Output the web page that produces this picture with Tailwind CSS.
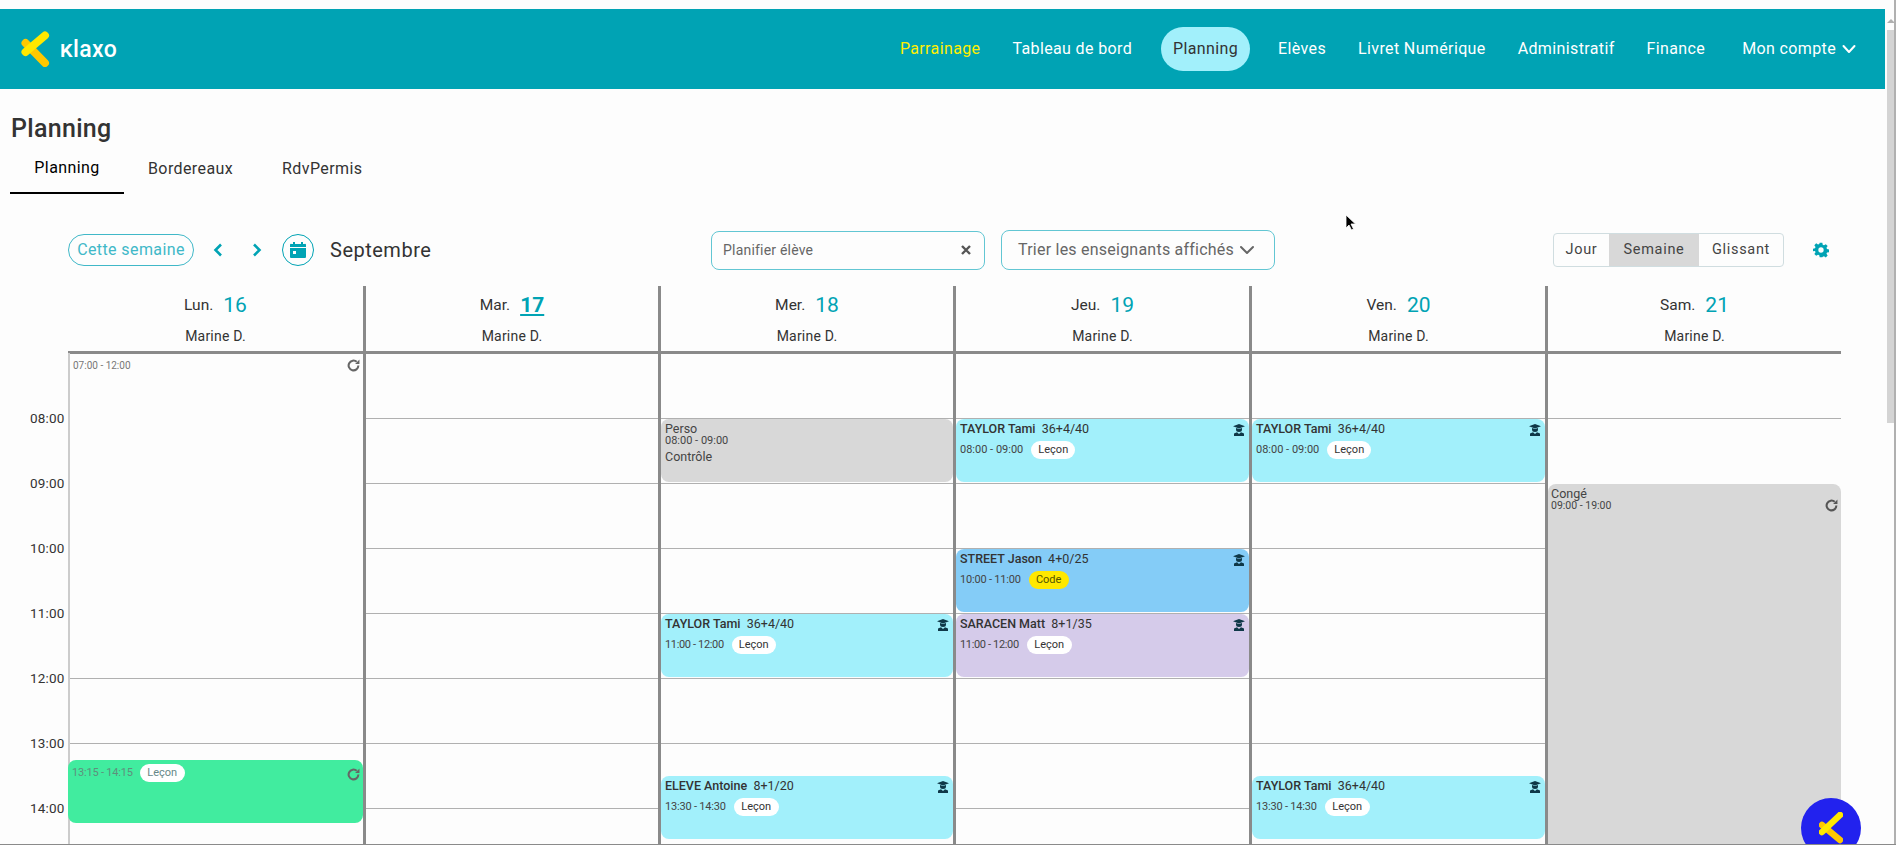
<!DOCTYPE html>
<html lang="fr">
<head>
  <meta charset="UTF-8" />
  <title>Klaxo - Planning</title>
  <script src="https://cdn.jsdelivr.net/npm/@tailwindcss/browser@4"></script>
</head>
<body class="bg-[#fdfdfd] font-['Roboto',sans-serif] text-[#333333] overflow-hidden">
<div class="relative w-[1896px] h-[845px] overflow-hidden flex">

  <!-- Page -->
  <div class="w-[1885px] shrink-0 pt-[9px]">
    <!-- Navbar -->
    <div class="h-[80px] bg-[#00a3b4] flex items-center justify-between text-white text-[16px] tracking-[0.37px]">
      <a class="flex items-center ml-[21px]">
        <svg class="w-[29px] h-[36px]" viewBox="0 0 29 36">
          <path d="M4.500 12 L24 32" stroke="#ffc800" stroke-width="8" stroke-linecap="round" fill="none"/>
          <path d="M4.500 21 L24 4.500" stroke="#ffe800" stroke-width="8" stroke-linecap="round" fill="none"/>
        </svg>
        <span class="ml-[10px] text-[23px] font-medium leading-none tracking-[0.4px]"><span class="[font-variant-caps:small-caps]">k</span>laxo</span>
      </a>
      <div class="flex items-center mr-[29px]">
        <a class="text-[#ffee00] pr-[32px]">Parrainage</a>
        <a class="pr-[29px]">Tableau de bord</a>
        <a class="h-[44px] w-[89px] flex items-center justify-center rounded-[22px] bg-[#a2f0fb] text-[#333333]">Planning</a>
        <a class="pl-[28px] pr-[32px]">Elèves</a>
        <a class="pr-[32px]">Livret Numérique</a>
        <a class="pr-[32px]">Administratif</a>
        <a class="pr-[37px]">Finance</a>
        <a class="flex items-center gap-[6px]">Mon compte
          <svg class="w-[14px] h-[14px]" viewBox="0 0 14 14" fill="none" stroke="white" stroke-width="2" stroke-linecap="round" stroke-linejoin="round"><path d="M1.500 4 L7 10 L12.500 4"/></svg>
        </a>
      </div>
    </div>

    <!-- Title and tabs -->
    <h1 class="ml-[11px] mt-[24px] text-[25px] leading-[32px] font-medium tracking-[0.3px] text-[#333333]">Planning</h1>
    <div class="ml-[10px] mt-[5px] flex text-[16px] tracking-[0.4px] h-[44px]">
      <div class="w-[114px] h-full border-b-2 border-black text-black text-center leading-[36px]">Planning</div>
      <div class="ml-[24px] leading-[37px]">Bordereaux</div>
      <div class="ml-[49px] leading-[37px]">RdvPermis</div>
    </div>

    <!-- Toolbar -->
    <div class="mt-[36px] h-[40px] flex items-center relative">
      <button class="ml-[68px] w-[126px] h-[32px] rounded-full border border-[#40b8c8] text-[#40b8c8] text-[16px] tracking-[0.4px] leading-none">Cette semaine</button>
      <svg class="ml-[18px] w-[12px] h-[14px]" viewBox="0 0 12 14" fill="none" stroke="#00a3b4" stroke-width="2.600"><path d="M9 1.500 L3.500 7 L9 12.500"/></svg>
      <svg class="ml-[27px] w-[12px] h-[14px]" viewBox="0 0 12 14" fill="none" stroke="#00a3b4" stroke-width="2.600"><path d="M3 1.500 L8.500 7 L3 12.500"/></svg>
      <div class="ml-[19px] w-[32px] h-[32px] rounded-full border border-[#00a3b4] flex items-center justify-center">
        <svg class="w-[16px] h-[16px]" viewBox="0 0 16 16" fill="#00a3b4"><path d="M3 0h2v2h6V0h2v2h1.500A1 1 0 0 1 16 3v2H0V3a1 1 0 0 1 1.500-1H3zM0 6h16v9a1 1 0 0 1-1 1H1a1 1 0 0 1-1-1zm3 3v3h3V9z" fill-rule="evenodd"/></svg>
      </div>
      <div class="ml-[16px] w-[102px] whitespace-nowrap text-[20px] tracking-[0.5px]">Septembre</div>

      <div class="ml-[279px] w-[274px] h-[39px] rounded-[8px] border border-[#62c6d3] flex items-center justify-between pl-[11px] pr-[13px] text-[14px] tracking-[0.2px] text-[#666666]">
        <span>Planifier élève</span>
        <svg class="w-[10px] h-[10px]" viewBox="0 0 10 10" stroke="#555555" stroke-width="2.400"><path d="M1 1 L9 9 M9 1 L1 9"/></svg>
      </div>
      <div class="ml-[16px] w-[274px] h-[40px] rounded-[8px] border border-[#62c6d3] flex items-center pl-[16px] text-[16px] tracking-[0.23px] text-[#666666]">
        <span>Trier les enseignants affichés</span>
        <svg class="ml-[6px] w-[14px] h-[14px]" viewBox="0 0 14 14" fill="none" stroke="#666666" stroke-width="2" stroke-linecap="round" stroke-linejoin="round"><path d="M1 4 L7 10 L13 4"/></svg>
      </div>

      <div class="ml-[278px] w-[231px] h-[34px] rounded-[4px] border border-[#d0dde0] flex overflow-hidden text-[14.5px] tracking-[0.7px] text-[#444444]">
        <div class="w-[55px] flex items-center justify-center">Jour</div>
        <div class="w-[90px] bg-[#d8d8d8] flex items-center justify-center">Semaine</div>
        <div class="flex-1 flex items-center justify-center">Glissant</div>
      </div>
      <svg class="ml-[29px] w-[16px] h-[16px]" viewBox="0 0 24 24" fill="#00a3b4"><path fill-rule="evenodd" d="M10 1h4l.6 3.200 1.900.8 2.700-1.800 2.800 2.800-1.800 2.700.8 1.900 3.200.6v4l-3.200.6-.8 1.900 1.800 2.700-2.800 2.800-2.700-1.800-1.900.8L14 23h-4l-.6-3.200-1.900-.8-2.700 1.800-2.800-2.800 1.800-2.700-.8-1.900L-.2 14v-4l3.200-.6.8-1.900L2 4.800 4.800 2l2.700 1.800 1.900-.8zM12 8a4 4 0 1 0 0 8 4 4 0 0 0 0-8z"/></svg>
    </div>

    <!-- Calendar -->
    <div class="mt-[16px] flex">
      <!-- hours -->
      <div class="w-[68px] shrink-0 pt-[68px] text-[13.5px] tracking-[0.2px] text-[#333333]">
        <div class="h-[65px] flex items-end"><span class="ml-[30px] translate-y-[9px]">08:00</span></div>
        <div class="h-[65px] flex items-end"><span class="ml-[30px] translate-y-[9px]">09:00</span></div>
        <div class="h-[65px] flex items-end"><span class="ml-[30px] translate-y-[9px]">10:00</span></div>
        <div class="h-[65px] flex items-end"><span class="ml-[30px] translate-y-[9px]">11:00</span></div>
        <div class="h-[65px] flex items-end"><span class="ml-[30px] translate-y-[9px]">12:00</span></div>
        <div class="h-[65px] flex items-end"><span class="ml-[30px] translate-y-[9px]">13:00</span></div>
        <div class="h-[65px] flex items-end"><span class="ml-[30px] translate-y-[9px]">14:00</span></div>
      </div>

      <div class="w-[1773px] grid grid-cols-[298px_295px_295px_296px_296px_1fr] relative">
        <!-- Lun -->
        <div class="relative h-[559px] border-r-[3px] border-[#8a8a8a]">
          <div class="h-[68px] border-b-[3px] border-[#8a8a8a] text-center">
            <div class="h-[38px] flex items-center justify-center gap-[10px] text-[15.5px] pt-[1px]">Lun. <span class="text-[21px] text-[#00a3b4]">16</span></div>
            <div class="text-[14px] tracking-[0.2px] leading-[24px]">Marine D.</div>
          </div>
          <div class="absolute left-0 top-[67px] bottom-0 w-[2px] bg-[#cccccc]"></div>
          <div class="h-[65px]"></div>
          <div class="h-[65px]"></div>
          <div class="h-[65px]"></div>
          <div class="h-[65px]"></div>
          <div class="h-[65px] border-b border-[#b0b0b0]"></div>
          <div class="h-[65px] border-b border-[#b0b0b0]"></div>
          <div class="h-[65px] border-b border-[#b0b0b0]"></div>
          <div class="absolute left-[5px] top-[72px] text-[10px] text-[#777777]">07:00 - 12:00</div>
          <svg class="absolute right-[3px] top-[73px] w-[13px] h-[13px]" viewBox="0 0 12 12" fill="none" stroke="#666666" stroke-width="1.900"><path d="M10.500 6A4.500 4.500 0 1 1 9 2.600"/><path d="M11.500 0.500V4.500H7.500" fill="#666666" stroke="none"/></svg>
          <div class="absolute left-0 right-0 top-[474px] h-[63px] rounded-[8px] bg-[#41ec9f] pl-[4px]">
            <div class="flex items-center h-[18px] mt-[4px] gap-[7px] text-[11px] text-[#5f8f7c]"><span class="tracking-[-0.2px]">13:15 - 14:15</span><span class="w-[45px] h-[18px] rounded-full bg-white flex items-center justify-center text-[#668888]">Leçon</span></div>
            <svg class="absolute right-[3px] top-[8px] w-[13px] h-[13px]" viewBox="0 0 12 12" fill="none" stroke="#666666" stroke-width="1.900"><path d="M10.500 6A4.500 4.500 0 1 1 9 2.600"/><path d="M11.500 0.500V4.500H7.500" fill="#666666" stroke="none"/></svg>
          </div>
        </div>

        <!-- Mar -->
        <div class="relative h-[559px] border-r-[3px] border-[#8a8a8a]">
          <div class="h-[68px] border-b-[3px] border-[#8a8a8a] text-center">
            <div class="h-[38px] flex items-center justify-center gap-[10px] text-[15.5px] pt-[1px]">Mar. <span class="text-[21px] text-[#00a3b4] font-bold underline">17</span></div>
            <div class="text-[14px] tracking-[0.2px] leading-[24px]">Marine D.</div>
          </div>
          <div class="h-[65px] border-b border-[#b0b0b0]"></div>
          <div class="h-[65px] border-b border-[#b0b0b0]"></div>
          <div class="h-[65px] border-b border-[#b0b0b0]"></div>
          <div class="h-[65px] border-b border-[#b0b0b0]"></div>
          <div class="h-[65px] border-b border-[#b0b0b0]"></div>
          <div class="h-[65px] border-b border-[#b0b0b0]"></div>
          <div class="h-[65px] border-b border-[#b0b0b0]"></div>
        </div>

        <!-- Mer -->
        <div class="relative h-[559px] border-r-[3px] border-[#8a8a8a]">
          <div class="h-[68px] border-b-[3px] border-[#8a8a8a] text-center">
            <div class="h-[38px] flex items-center justify-center gap-[10px] text-[15.5px] pt-[1px]">Mer. <span class="text-[21px] text-[#00a3b4]">18</span></div>
            <div class="text-[14px] tracking-[0.2px] leading-[24px]">Marine D.</div>
          </div>
          <div class="h-[65px] border-b border-[#b0b0b0]"></div>
          <div class="h-[65px] border-b border-[#b0b0b0]"></div>
          <div class="h-[65px] border-b border-[#b0b0b0]"></div>
          <div class="h-[65px] border-b border-[#b0b0b0]"></div>
          <div class="h-[65px] border-b border-[#b0b0b0]"></div>
          <div class="h-[65px] border-b border-[#b0b0b0]"></div>
          <div class="h-[65px] border-b border-[#b0b0b0]"></div>
          <div class="absolute left-0 right-0 top-[133px] h-[63px] rounded-[8px] bg-[#d8d8d8] px-[4px] pt-[3px] text-[#444444]">
            <div class="text-[12.5px] leading-[13px]">Perso</div>
            <div class="text-[11px] leading-[11px]">08:00 - 09:00</div>
            <div class="text-[12.5px] leading-[14px] mt-[4px]">Contrôle</div>
          </div>
          <div class="absolute left-0 right-0 top-[328px] h-[63px] rounded-[8px] bg-[#a2f0fb] px-[4px] pt-[2px]">
            <div class="flex justify-between items-center h-[17px] text-[12.5px]"><span><b class="font-medium">TAYLOR Tami</b>&nbsp; 36+4/40</span><svg class="w-[12px] h-[12px]" viewBox="0 0 12 12" fill="#0f3848"><path d="M6 0 L12 2.200 L6 4.400 L0 2.200Z"/><path d="M3 4 L6 5 L9 4 V5.500 A3 2.500 0 0 1 3 5.500Z"/><path d="M1 12 V9.500 L4 8.300 L6 10 L8 8.300 L11 9.500 V12Z"/></svg></div>
            <div class="flex items-center h-[18px] mt-[3px] gap-[8px] text-[11px] text-[#444444]"><span class="tracking-[-0.35px]">11:00 - 12:00</span><span class="w-[44px] h-[18px] rounded-full bg-white flex items-center justify-center text-[#333333]">Leçon</span></div>
          </div>
          <div class="absolute left-0 right-0 top-[490px] h-[63px] rounded-[8px] bg-[#a2f0fb] px-[4px] pt-[2px]">
            <div class="flex justify-between items-center h-[17px] text-[12.5px]"><span><b class="font-medium">ELEVE Antoine</b>&nbsp; 8+1/20</span><svg class="w-[12px] h-[12px]" viewBox="0 0 12 12" fill="#0f3848"><path d="M6 0 L12 2.200 L6 4.400 L0 2.200Z"/><path d="M3 4 L6 5 L9 4 V5.500 A3 2.500 0 0 1 3 5.500Z"/><path d="M1 12 V9.500 L4 8.300 L6 10 L8 8.300 L11 9.500 V12Z"/></svg></div>
            <div class="flex items-center h-[18px] mt-[3px] gap-[8px] text-[11px] text-[#444444]"><span class="tracking-[-0.2px]">13:30 - 14:30</span><span class="w-[45px] h-[18px] rounded-full bg-white flex items-center justify-center text-[#333333]">Leçon</span></div>
          </div>
        </div>

        <!-- Jeu -->
        <div class="relative h-[559px] border-r-[3px] border-[#8a8a8a]">
          <div class="h-[68px] border-b-[3px] border-[#8a8a8a] text-center">
            <div class="h-[38px] flex items-center justify-center gap-[10px] text-[15.5px] pt-[1px]">Jeu. <span class="text-[21px] text-[#00a3b4]">19</span></div>
            <div class="text-[14px] tracking-[0.2px] leading-[24px]">Marine D.</div>
          </div>
          <div class="h-[65px] border-b border-[#b0b0b0]"></div>
          <div class="h-[65px] border-b border-[#b0b0b0]"></div>
          <div class="h-[65px] border-b border-[#b0b0b0]"></div>
          <div class="h-[65px] border-b border-[#b0b0b0]"></div>
          <div class="h-[65px] border-b border-[#b0b0b0]"></div>
          <div class="h-[65px] border-b border-[#b0b0b0]"></div>
          <div class="h-[65px] border-b border-[#b0b0b0]"></div>
          <div class="absolute left-0 right-0 top-[133px] h-[63px] rounded-[8px] bg-[#a2f0fb] px-[4px] pt-[2px]">
            <div class="flex justify-between items-center h-[17px] text-[12.5px]"><span><b class="font-medium">TAYLOR Tami</b>&nbsp; 36+4/40</span><svg class="w-[12px] h-[12px]" viewBox="0 0 12 12" fill="#0f3848"><path d="M6 0 L12 2.200 L6 4.400 L0 2.200Z"/><path d="M3 4 L6 5 L9 4 V5.500 A3 2.500 0 0 1 3 5.500Z"/><path d="M1 12 V9.500 L4 8.300 L6 10 L8 8.300 L11 9.500 V12Z"/></svg></div>
            <div class="flex items-center h-[18px] mt-[3px] gap-[8px] text-[11px] text-[#444444]"><span>08:00 - 09:00</span><span class="w-[44px] h-[18px] rounded-full bg-white flex items-center justify-center text-[#333333]">Leçon</span></div>
          </div>
          <div class="absolute left-0 right-0 top-[263px] h-[63px] rounded-[8px] bg-[#84ccf7] px-[4px] pt-[2px]">
            <div class="flex justify-between items-center h-[17px] text-[12.5px]"><span><b class="font-medium">STREET Jason</b>&nbsp; 4+0/25</span><svg class="w-[12px] h-[12px]" viewBox="0 0 12 12" fill="#0f3848"><path d="M6 0 L12 2.200 L6 4.400 L0 2.200Z"/><path d="M3 4 L6 5 L9 4 V5.500 A3 2.500 0 0 1 3 5.500Z"/><path d="M1 12 V9.500 L4 8.300 L6 10 L8 8.300 L11 9.500 V12Z"/></svg></div>
            <div class="flex items-center h-[18px] mt-[3px] gap-[8px] text-[11px] text-[#444444]"><span class="tracking-[-0.2px]">10:00 - 11:00</span><span class="w-[40px] h-[18px] rounded-full bg-[#ffe800] flex items-center justify-center text-[#555500]">Code</span></div>
          </div>
          <div class="absolute left-0 right-0 top-[328px] h-[63px] rounded-[8px] bg-[#d5cbea] px-[4px] pt-[2px]">
            <div class="flex justify-between items-center h-[17px] text-[12.5px]"><span><b class="font-medium">SARACEN Matt</b>&nbsp; 8+1/35</span><svg class="w-[12px] h-[12px]" viewBox="0 0 12 12" fill="#0f3848"><path d="M6 0 L12 2.200 L6 4.400 L0 2.200Z"/><path d="M3 4 L6 5 L9 4 V5.500 A3 2.500 0 0 1 3 5.500Z"/><path d="M1 12 V9.500 L4 8.300 L6 10 L8 8.300 L11 9.500 V12Z"/></svg></div>
            <div class="flex items-center h-[18px] mt-[3px] gap-[8px] text-[11px] text-[#444444]"><span class="tracking-[-0.35px]">11:00 - 12:00</span><span class="w-[45px] h-[18px] rounded-full bg-white flex items-center justify-center text-[#333333]">Leçon</span></div>
          </div>
        </div>

        <!-- Ven -->
        <div class="relative h-[559px] border-r-[3px] border-[#8a8a8a]">
          <div class="h-[68px] border-b-[3px] border-[#8a8a8a] text-center">
            <div class="h-[38px] flex items-center justify-center gap-[10px] text-[15.5px] pt-[1px]">Ven. <span class="text-[21px] text-[#00a3b4]">20</span></div>
            <div class="text-[14px] tracking-[0.2px] leading-[24px]">Marine D.</div>
          </div>
          <div class="h-[65px] border-b border-[#b0b0b0]"></div>
          <div class="h-[65px] border-b border-[#b0b0b0]"></div>
          <div class="h-[65px] border-b border-[#b0b0b0]"></div>
          <div class="h-[65px] border-b border-[#b0b0b0]"></div>
          <div class="h-[65px] border-b border-[#b0b0b0]"></div>
          <div class="h-[65px] border-b border-[#b0b0b0]"></div>
          <div class="h-[65px] border-b border-[#b0b0b0]"></div>
          <div class="absolute left-0 right-0 top-[133px] h-[63px] rounded-[8px] bg-[#a2f0fb] px-[4px] pt-[2px]">
            <div class="flex justify-between items-center h-[17px] text-[12.5px]"><span><b class="font-medium">TAYLOR Tami</b>&nbsp; 36+4/40</span><svg class="w-[12px] h-[12px]" viewBox="0 0 12 12" fill="#0f3848"><path d="M6 0 L12 2.200 L6 4.400 L0 2.200Z"/><path d="M3 4 L6 5 L9 4 V5.500 A3 2.500 0 0 1 3 5.500Z"/><path d="M1 12 V9.500 L4 8.300 L6 10 L8 8.300 L11 9.500 V12Z"/></svg></div>
            <div class="flex items-center h-[18px] mt-[3px] gap-[8px] text-[11px] text-[#444444]"><span>08:00 - 09:00</span><span class="w-[44px] h-[18px] rounded-full bg-white flex items-center justify-center text-[#333333]">Leçon</span></div>
          </div>
          <div class="absolute left-0 right-0 top-[490px] h-[63px] rounded-[8px] bg-[#a2f0fb] px-[4px] pt-[2px]">
            <div class="flex justify-between items-center h-[17px] text-[12.5px]"><span><b class="font-medium">TAYLOR Tami</b>&nbsp; 36+4/40</span><svg class="w-[12px] h-[12px]" viewBox="0 0 12 12" fill="#0f3848"><path d="M6 0 L12 2.200 L6 4.400 L0 2.200Z"/><path d="M3 4 L6 5 L9 4 V5.500 A3 2.500 0 0 1 3 5.500Z"/><path d="M1 12 V9.500 L4 8.300 L6 10 L8 8.300 L11 9.500 V12Z"/></svg></div>
            <div class="flex items-center h-[18px] mt-[3px] gap-[8px] text-[11px] text-[#444444]"><span class="tracking-[-0.2px]">13:30 - 14:30</span><span class="w-[45px] h-[18px] rounded-full bg-white flex items-center justify-center text-[#333333]">Leçon</span></div>
          </div>
        </div>

        <!-- Sam -->
        <div class="relative h-[559px]">
          <div class="h-[68px] border-b-[3px] border-[#8a8a8a] text-center">
            <div class="h-[38px] flex items-center justify-center gap-[10px] text-[15.5px] pt-[1px]">Sam. <span class="text-[21px] text-[#00a3b4]">21</span></div>
            <div class="text-[14px] tracking-[0.2px] leading-[24px]">Marine D.</div>
          </div>
          <div class="h-[65px] border-b border-[#b0b0b0]"></div>
          <div class="absolute left-0 right-0 top-[198px] bottom-0 rounded-t-[8px] bg-[#d8d8d8] px-[3px] pt-[3px] text-[#444444]">
            <div class="text-[12.5px] leading-[13px]">Congé</div>
            <div class="text-[10.5px] leading-[11px]">09:00 - 19:00</div>
            <svg class="absolute right-[3px] top-[15px] w-[13px] h-[13px]" viewBox="0 0 12 12" fill="none" stroke="#555555" stroke-width="1.900"><path d="M10.500 6A4.500 4.500 0 1 1 9 2.600"/><path d="M11.500 0.500V4.500H7.500" fill="#555555" stroke="none"/></svg>
          </div>
        </div>
      </div>
    </div>
  </div>

  <!-- Scrollbar -->
  <div class="w-[11px] shrink-0 relative border-r-2 border-[#b0b0b0]">
    <div class="absolute left-[2px] right-0 top-[30px] h-[393px] bg-[#d4d4d4]"></div>
    <div class="absolute left-[2px] top-[19px] w-0 h-0 border-x-[4px] border-x-transparent border-b-[4px] border-b-[#b0b0b0]"></div>
  </div>

  <!-- Bottom edge, help bubble, mouse cursor -->
  <div class="absolute left-[1801px] top-[798px] w-[60px] h-[60px] rounded-full bg-[#2222ee] flex items-center justify-center">
    <svg class="w-[24px] h-[32px]" viewBox="0 0 24 32">
      <path d="M3 13 L21 28" stroke="#ffc800" stroke-width="6.500" stroke-linecap="round" fill="none"/>
      <path d="M3 20 L21 3" stroke="#ffe800" stroke-width="6.500" stroke-linecap="round" fill="none"/>
    </svg>
  </div>
  <div class="absolute left-0 right-0 top-[844px] h-px bg-[#8a8a8a]"></div>
  <svg class="absolute left-[1345px] top-[214px] w-[12px] h-[17px]" viewBox="0 0 12 17" fill="black" stroke="white" stroke-width="0.800"><path d="M1 1 V14 L4 11 L6.500 16 L8.500 15 L6 10 H10.500 Z"/></svg>
</div>
</body>
</html>
